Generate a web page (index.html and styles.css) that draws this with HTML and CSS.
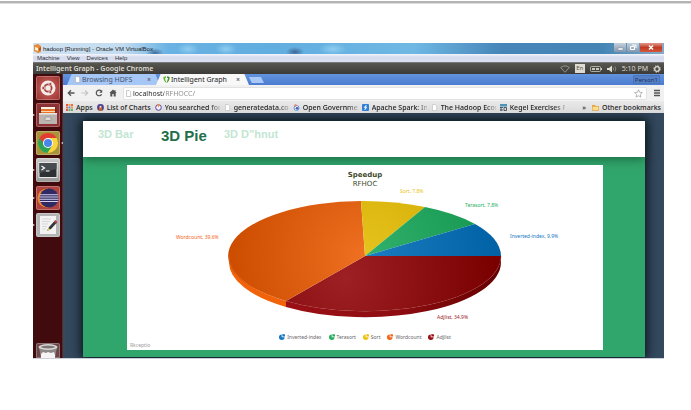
FILE: index.html
```html
<!DOCTYPE html>
<html lang="en">
<head>
<meta charset="utf-8">
<title>Intelligent Graph</title>
<link rel="stylesheet" href="styles.css">
</head>
<body>
<main class="vm">
  <header class="vm-title">
    <svg class="vm-logo" viewBox="0 0 8 9"><path d="M0 1l4-1 3 2v6l-3 1-4-2z" fill="#e88a3a"/><path d="M1 3l3 1v3L1 6z" fill="#fff3d8"/><path d="M5 4l2-1v3L5 7z" fill="#b7561b"/></svg>
    <span class="vm-name">hadoop [Running] - Oracle VM VirtualBox</span>
    <div class="win-buttons">
      <button class="win-btn" aria-label="Minimize"><svg viewBox="0 0 12 9"><rect x="4" y="5" width="5" height="2" fill="#fff" stroke="#67788c" stroke-width=".4"/></svg></button>
      <button class="win-btn" aria-label="Restore"><svg viewBox="0 0 12 9"><path d="M5 2h4v3M3.500 3.500h4v3h-4z" fill="none" stroke="#fff"/></svg></button>
      <button class="win-btn close" aria-label="Close"><svg viewBox="0 0 12 9"><path d="M4 2.500l4 4M8 2.500l-4 4" stroke="#fff" stroke-width="1.500"/></svg></button>
    </div>
  </header>
  <nav class="vm-menu"><a href="#">Machine</a><a href="#">View</a><a href="#">Devices</a><a href="#">Help</a></nav>
  <div class="panel">
    <span class="panel-title">Intelligent Graph - Google Chrome</span>
    <div class="indicators">
      <svg width="10" height="8" viewBox="0 0 10 8"><path d="M.7 2.500Q5-.8 9.300 2.500L5 7.300z" fill="none" stroke="#a5a39a" stroke-width=".8"/></svg>
      <span class="lang">En</span>
      <svg width="12" height="8" viewBox="0 0 12 8"><rect x=".5" y="1.500" width="10" height="5" rx="1" fill="none" stroke="#c9c7be" stroke-width=".8"/><path d="M2 3h3v2H2zM6 3h3v2H6zM11 3h1v2h-1z" fill="#c9c7be"/></svg>
      <svg width="10" height="8" viewBox="0 0 10 8"><path d="M0 3h2l3-2.500v7L2 5H0z" fill="#dfdbd2"/><path d="M6.200 2.500q1 1.500 0 3M8 1.500q1.700 2.500 0 5" fill="none" stroke="#a5a39a" stroke-width=".7"/></svg>
      <time>5:10 PM</time>
      <svg width="8" height="8" viewBox="0 0 8 8"><circle cx="4" cy="4" r="2.300" fill="none" stroke="#dfdbd2" stroke-width="1.300"/><circle cx="4" cy="4" r="3.300" fill="none" stroke="#dfdbd2" stroke-width="1" stroke-dasharray="1.300 1.300"/></svg>
    </div>
  </div>
  <div class="desktop">
    <aside class="launcher">
      <div class="apps">
        <button class="app dash" aria-label="Dash"><svg viewBox="0 0 24 24"><circle cx="12" cy="12" r="7.500" fill="#f4ece9"/><circle cx="12" cy="12" r="3.600" fill="none" stroke="#a8433f" stroke-width="1.800"/><g fill="#a8433f" stroke="#f4ece9" stroke-width=".6"><circle cx="7.300" cy="12" r="1.500"/><circle cx="14.300" cy="8" r="1.500"/><circle cx="14.300" cy="16" r="1.500"/></g></svg></button>
        <button class="app files run" aria-label="Files"><svg viewBox="0 0 24 24"><path d="M4 4h16l1 9H3z" fill="#6b2d22"/><path d="M5 4h14v2H5z" fill="#f6f0e8"/><path d="M5 6h14v4H5z" fill="#e8742c"/><path d="M5 8h14v1H5z" fill="#fbd9b0"/><path d="M3 10h18v11H3z" fill="#b9b4b0"/><path d="M3 10h18v1.500H3z" fill="#e9e6e3"/><rect x="9" y="14" width="6" height="3.500" rx="1" fill="#dedad6" stroke="#8f8a86" stroke-width=".7"/></svg></button>
        <button class="app chrome run focus" aria-label="Google Chrome"><svg viewBox="0 0 24 24"><circle cx="12" cy="12" r="10" fill="#fbd33c"/><path d="M3.300 7A10 10 0 0 0 11.500 22l4.800-7.500-4.300 2.500z" fill="#2da455"/><path d="M3.300 7A10 10 0 0 1 20.700 7H12L7.700 14.500z" fill="#e23d31"/><path d="M3.300 7L7.700 14.500 12 17z" fill="#2da455"/><circle cx="12" cy="12" r="5" fill="#fff"/><circle cx="12" cy="12" r="4" fill="#4a86e8"/></svg></button>
        <button class="app term run" aria-label="Terminal"><svg viewBox="0 0 24 24"><rect x="2.500" y="4" width="19" height="16" rx="1" fill="#e8e8e8"/><rect x="3.500" y="5" width="17" height="14" fill="#2d3133"/><path d="M3.500 5h17v6l-17 4z" fill="#474c4e"/><path d="M5.500 8l3 2-3 2M10 13h3.500" fill="none" stroke="#fff" stroke-width="1.200"/></svg></button>
        <button class="app eclipse run" aria-label="Eclipse"><svg viewBox="0 0 24 24"><circle cx="11" cy="12" r="9.500" fill="#ef8a2b"/><circle cx="13" cy="12" r="9.500" fill="#2f2a63"/><path d="M3.800 8.700h18.400M3.500 11h19M3.500 13.300h19M4 15.500h18" stroke="#d5d2ea" stroke-width="1.100"/></svg></button>
        <button class="app edit run" aria-label="Text Editor"><svg viewBox="0 0 24 24"><path d="M4 3h16v18H4z" fill="#f3f3f3"/><path d="M6 6h9M6 8.500h8M6 11h6M6 13.500h5M6 16h4" stroke="#cfcfcf" stroke-width=".8"/><path d="M11 18l2-4 6-6.500 2 2-6 6.500z" fill="#34383a"/><path d="M18 8.500l1.500-1.500 2 2L20 10.500z" fill="#c0404a"/><path d="M11 18l1.500-3 2 1.500z" fill="#e8cf58"/></svg></button>
      </div>
      <button class="app trash" aria-label="Trash"><svg viewBox="0 0 24 15"><path d="M3 4h18l-2 11H5z" fill="#8d8888"/><ellipse cx="12" cy="4" rx="9.500" ry="3" fill="#d9d6d5"/><ellipse cx="12" cy="4" rx="7" ry="1.500" fill="#7d7979"/><path d="M5 15v-4l2-2 3 1 2-1 3 1 3-1 1 3v3z" fill="#f5f3f3"/></svg></button>
    </aside>
    <section class="browser">
      <div class="tabs">
        <a class="tab" href="#"><svg class="ico" viewBox="0 0 7 7"><path d="M1.500.5h2.700l1.500 1.500v4.500H1.500z" fill="#fff" stroke="#9a9a9a" stroke-width=".5"/></svg><span>Browsing HDFS</span><b>×</b></a>
        <a class="tab active" href="#"><svg class="ico" viewBox="0 0 7 7"><path d="M.3 1L3 .3v1.500L2 2.300l.6 2.300 1 2.400Q.3 5 .3 1z" fill="#6cb52d"/><path d="M6.700 1L4 .3v1.500l1 .5-.6 2.300-.8 2.400Q6.700 5 6.700 1z" fill="#3d9437"/></svg><span>Intelligent Graph</span><b>×</b></a>
        <button class="new-tab" aria-label="New tab"></button>
        <span class="person">Person1</span>
      </div>
      <div class="toolbar">
        <button aria-label="Back"><svg viewBox="0 0 8 8"><path d="M7.500 4H1.500M4 1.300L1.300 4 4 6.700" fill="none" stroke="#555" stroke-width="1.300"/></svg></button>
        <button aria-label="Forward"><svg viewBox="0 0 8 8"><path d="M.5 4h6M4 1.300L6.700 4 4 6.700" fill="none" stroke="#c4c4c4" stroke-width="1.200"/></svg></button>
        <button aria-label="Reload"><svg viewBox="0 0 8 8"><path d="M6.300 2.200A2.800 2.800 0 1 0 6.600 5.200" fill="none" stroke="#555" stroke-width="1.200"/><path d="M7.200.7v3H4.200z" fill="#555"/></svg></button>
        <button aria-label="Home"><svg viewBox="0 0 8 8"><path d="M4 .5L.3 4h1v3.500h2V5h1.400v2.500h2V4h1L6.500 2.800V1h-1v.9z" fill="#555"/></svg></button>
        <div class="omnibox">
          <svg class="ico" viewBox="0 0 7 7"><path d="M1.500.5h2.700l1.500 1.500v4.500H1.500z" fill="#fff" stroke="#9a9a9a" stroke-width=".5"/></svg>
          <input type="text" aria-label="Address" value="localhost/RFHOCC/">
          <svg class="star" viewBox="0 0 9 9"><path d="M4.500.7l1.100 2.600 2.800.2-2.100 1.900.6 2.800-2.400-1.500-2.400 1.500.6-2.800L.6 3.500l2.800-.2z" fill="#fff" stroke="#999" stroke-width=".7"/></svg>
        </div>
        <button aria-label="Menu"><svg viewBox="0 0 8 8"><path d="M1 1.500h6M1 4h6M1 6.500h6" stroke="#555" stroke-width="1.400"/></svg></button>
      </div>
      <nav class="bookmarks">
        <a href="#"><svg class="ico" viewBox="0 0 7 7"><path d="M0 0h2v2H0zM0 5h2v2H0z" fill="#e2574c"/><path d="M2.500 0h2v2h-2zM5 2.500h2v2H5z" fill="#ef9a3a"/><path d="M5 0h2v2H5zM0 2.500h2v2H0z" fill="#e9694f"/><path d="M2.500 2.500h2v2h-2z" fill="#4f8fe0"/><path d="M2.500 5h2v2h-2zM5 5h2v2H5z" fill="#6db36b"/></svg><span>Apps</span></a>
        <a href="#"><svg class="ico" viewBox="0 0 7 7"><circle cx="3.500" cy="3.500" r="3.400" fill="#4c3f94"/><path d="M2 7V4q0-2 1.500-2T5 4v3z" fill="#c7662b"/><circle cx="3.500" cy="2.800" r="1" fill="#e9d9cf"/></svg><span>List of Charts</span></a>
        <a class="long" href="#"><svg class="ico" viewBox="0 0 7 7"><circle cx="3.500" cy="3.500" r="2.800" fill="#f4efff" stroke="#5a3fa0"/><path d="M2 .3h3L3.500 3.500z" fill="#f0953a"/></svg><span>You searched for</span></a>
        <a class="long" href="#"><svg class="ico" viewBox="0 0 7 7"><path d="M1.500.5h2.700l1.500 1.500v4.500H1.500z" fill="#fff" stroke="#b0b0b0" stroke-width=".5"/></svg><span>generatedata.co</span></a>
        <a class="long" href="#"><svg class="ico" viewBox="0 0 7 7"><circle cx="3.500" cy="4" r="2.500" fill="#fff" stroke="#4b9ddd"/><circle cx="2.500" cy="1.500" r="1.300" fill="#e88074"/><circle cx="4" cy="4.300" r="1.400" fill="#5b55b5"/></svg><span>Open Governme</span></a>
        <a class="long" href="#"><svg class="ico" viewBox="0 0 7 7"><rect width="7" height="7" rx="1" fill="#2f7fd6"/><path d="M4.300 1L2 3.500h1.500L2.700 6 5 3.200H3.700z" fill="#fff" stroke="#fff" stroke-width=".4"/></svg><span>Apache Spark: In</span></a>
        <a class="long" href="#"><svg class="ico" viewBox="0 0 7 7"><path d="M1.500.5h2.700l1.500 1.500v4.500H1.500z" fill="#fff" stroke="#b0b0b0" stroke-width=".5"/></svg><span>The Hadoop Ecos</span></a>
        <a class="long" href="#"><svg class="ico" viewBox="0 0 7 7"><path d="M0 0h7v2.500H0z" fill="#4f93b8"/><path d="M0 3.500h3M4 3.500v3h2.500v-3zM1 3.500v3.500M0 6h3" fill="none" stroke="#3c4b55" stroke-width=".9"/></svg><span>Kegel Exercises F</span></a>
        <span class="more">»</span>
        <a href="#"><svg class="ico" viewBox="0 0 7 7"><path d="M0 1h3l.7 1H7v4.700H0z" fill="#e3a23c"/><path d="M.6 2.700h5.800v3.400H.6z" fill="#fbdc91"/></svg><span>Other bookmarks</span></a>
      </nav>
      <div class="page">
        <div class="site">
          <nav class="site-nav"><a href="#">3D Bar</a><a class="on" href="#">3D Pie</a><a href="#">3D D"hnut</a></nav>
          <div class="stage">
            <figure class="chart">
              <figcaption><strong>Speedup</strong><span>RFHOC</span></figcaption>
              <svg class="pie" viewBox="0 0 476 143">
                <defs>
                  <radialGradient id="blue" gradientUnits="userSpaceOnUse" cx="238" cy="68" r="136"><stop offset="0" stop-color="#1c7cc0"/><stop offset="1" stop-color="#0061a5"/></radialGradient>
                  <radialGradient id="green" gradientUnits="userSpaceOnUse" cx="238" cy="68" r="136"><stop offset="0" stop-color="#31b16b"/><stop offset="1" stop-color="#159650"/></radialGradient>
                  <radialGradient id="gold" gradientUnits="userSpaceOnUse" cx="238" cy="68" r="136"><stop offset="0" stop-color="#e6c31d"/><stop offset="1" stop-color="#d0a800"/></radialGradient>
                  <radialGradient id="orange" gradientUnits="userSpaceOnUse" cx="238" cy="68" r="136"><stop offset="0" stop-color="#f07022"/><stop offset="1" stop-color="#cc4c00"/></radialGradient>
                  <radialGradient id="red" gradientUnits="userSpaceOnUse" cx="218" cy="90" r="150"><stop offset="0" stop-color="#9d2024"/><stop offset="1" stop-color="#7a0000"/></radialGradient>
                  <linearGradient id="rim"><stop offset="0" stop-color="#9a1016"/><stop offset=".5" stop-color="#8f0d12"/><stop offset="1" stop-color="#650000"/></linearGradient>
                </defs>
                <path d="M102 68A136 55 0 0 0 159 113v6A136 55 0 0 1 102 74z" fill="#f26208"/>
                <path d="M374 68A136 55 0 0 1 159 113v6A136 55 0 0 0 374 74z" fill="url(#rim)"/>
                <path d="M238 68H374A136 55 0 0 1 159 113z" fill="url(#red)"/>
                <path d="M238 68L159 113A136 55 0 0 1 234 13z" fill="url(#orange)"/>
                <path d="M238 68L234 13A136 55 0 0 1 298 19z" fill="url(#gold)"/>
                <path d="M238 68L298 19A136 55 0 0 1 348 36z" fill="url(#green)"/>
                <path d="M238 68L348 36A136 55 0 0 1 374 68z" fill="url(#blue)"/>
                <path d="M102 68A136 55 0 0 0 159 113" fill="none" stroke="#f07a2c" stroke-width=".3"/>
                <path d="M159 113A136 55 0 0 0 374 68" fill="none" stroke="#a02c2e" stroke-width=".3"/>
                <g class="labels">
                  <text x="273" y="5" fill="#edc211">Sort, 7.8%</text>
                  <text x="338" y="19" fill="#27ae60">Terasort, 7.8%</text>
                  <text x="383" y="50" fill="#1478c2">Inverted-index, 9.9%</text>
                  <text x="49" y="51" fill="#f2641a">Wordcount, 39.6%</text>
                  <text x="310" y="131" fill="#9a1a1e">Adjlist, 34.9%</text>
                </g>
              </svg>
              <ul class="legend">
                <li><svg class="c1" viewBox="0 0 6 6"><path d="M2.700 3.300V.4A2.800 2.800 0 1 0 5.600 3.300z"/><path d="M3.400 2.600V0L6 .5v2.100z"/></svg>Inverted-index</li>
                <li><svg class="c2" viewBox="0 0 6 6"><path d="M2.700 3.300V.4A2.800 2.800 0 1 0 5.600 3.300z"/><path d="M3.400 2.600V0L6 .5v2.100z"/></svg>Terasort</li>
                <li><svg class="c3" viewBox="0 0 6 6"><path d="M2.700 3.300V.4A2.800 2.800 0 1 0 5.600 3.300z"/><path d="M3.400 2.600V0L6 .5v2.100z"/></svg>Sort</li>
                <li><svg class="c4" viewBox="0 0 6 6"><path d="M2.700 3.300V.4A2.800 2.800 0 1 0 5.600 3.300z"/><path d="M3.400 2.600V0L6 .5v2.100z"/></svg>Wordcount</li>
                <li><svg class="c5" viewBox="0 0 6 6"><path d="M2.700 3.300V.4A2.800 2.800 0 1 0 5.600 3.300z"/><path d="M3.400 2.600V0L6 .5v2.100z"/></svg>Adjlist</li>
              </ul>
              <small>Rkceptio</small>
            </figure>
          </div>
        </div>
      </div>
    </section>
  </div>
</main>
</body>
</html>
```
FILE: styles.css
```css
* { box-sizing: border-box; }
body { margin: 0; border-top: 1px solid #fff; background: #fff; font-family: "Noto Sans", "Open Sans", sans-serif; font-size: 7px; color: #333; }
body::before { content: ""; display: block; height: 2px; background: #b4b4b4; border-bottom: 1px solid #dcdcdc; }
a { color: inherit; text-decoration: none; }
button { border: 0; padding: 0; margin: 0; background: none; display: block; }
svg { display: block; flex: none; }
.ico { width: 7px; height: 7px; }

.vm { margin: 39px 27px 52px 33px; border-bottom: 1px solid #ccd0d8; }
.vm-title { display: flex; align-items: center; height: 11px; padding: 0 2px 0 1px; font: 6px "Liberation Sans", sans-serif; color: #222;
  background:
    radial-gradient(ellipse 9px 5px at 122px 10px, #3f6d9c, transparent),
    radial-gradient(ellipse 11px 6px at 155px 6px, #8fcdf0, transparent),
    radial-gradient(ellipse 11px 6px at 193px 6px, #8fcdf0, transparent),
    radial-gradient(ellipse 9px 5px at 262px 9px, #3f6797, transparent),
    radial-gradient(ellipse 14px 6px at 300px 6px, #8fcdf0, transparent),
    linear-gradient(90deg, #cfe2f2, #c3dcf0 90px, #69b2e3 135px, #60addf 240px, #6fb8e4 380px, #4585b8 470px, #4585b5 570px, #86a9c6); }
.vm-logo { width: 8px; height: 9px; }
.vm-name { margin-left: 1px; white-space: nowrap; }
.win-buttons { display: flex; margin-left: auto; align-self: flex-start; gap: 1px; }
.win-btn { width: 12px; height: 9px; background: linear-gradient(#c4d0dc, #8298ae); border-radius: 0 0 1px 1px; }
.win-btn svg { height: 9px; margin: auto; }
.win-btn.close { width: 22px; background: linear-gradient(#e29a8c, #c03a25 50%, #d5573a); }
.vm-menu { display: flex; gap: 7px; height: 8px; padding-left: 4px; font: 6px/8px "Liberation Sans", sans-serif; background: linear-gradient(#f4f6fb, #d5dbee 40%, #dde2f2); }

.panel { display: flex; align-items: center; justify-content: space-between; height: 12px; padding: 0 3px; background: linear-gradient(#57564f, #3c3b37); color: #dfdbd2; border-top: 1px solid #777; }
.panel-title { font-weight: 600; font-size: 7px; }
.indicators { display: flex; align-items: center; gap: 5px; font-size: 7px; }
.lang { width: 10px; height: 9px; line-height: 9px; text-align: center; background: #dfdbd2; color: #55544d; font-size: 6px; }

.desktop { display: flex; height: 284px; }
.launcher { width: 30px; flex: none; display: flex; flex-direction: column; justify-content: space-between; padding: 2px 3px 0; background: #410a0d; border-right: 1px solid #5c2a2e; }
.apps { display: flex; flex-direction: column; justify-content: space-between; height: 161px; }
.app { position: relative; width: 24px; height: 24px; border-radius: 2px; box-shadow: inset 0 0 0 1px rgba(255,255,255,.25); }
.app svg { width: 24px; height: 24px; }
.dash { background: radial-gradient(#d06a62, #98302f); }
.files { background: #8f3034; }
.chrome { background: #a8923a; }
.term { background: linear-gradient(#c9c9c9, #989898); }
.eclipse { background: #b04440; }
.edit { background: #b5b5b5; }
.app.trash { height: 15px; background: #6b4547; border-radius: 2px 2px 0 0; }
.app.trash svg { height: 15px; }
.run::before { content: ""; position: absolute; left: -3px; top: 11px; border: 1px solid transparent; border-left: 2px solid #e8dede; border-right: 0; }
.focus::after { content: ""; position: absolute; right: -3px; top: 11px; border: 1px solid transparent; border-right: 2px solid #e8dede; border-left: 0; }

.browser { flex: 1; min-width: 0; display: flex; flex-direction: column; }
.tabs { display: flex; height: 11px; padding: 0 4px; background: linear-gradient(#6294de, #4c7bd0); }
.tab { display: flex; align-items: center; gap: 1px; width: 93px; height: 11px; padding: 0 9px 0 7px; background: #a6c6f6; color: #44546a; white-space: nowrap; clip-path: polygon(5% 0, 95% 0, 100% 100%, 0 100%); }
.tab b { margin-left: auto; font-size: 7px; color: #667; }
.tab.active { background: #f8f8f8; color: #222; margin-left: -4px; }
.new-tab { width: 15px; height: 6px; margin-top: 3px; background: #a8c8f8; clip-path: polygon(0 0, 80% 0, 100% 100%, 18% 100%); }
.person { margin-left: auto; align-self: center; height: 9px; line-height: 8px; padding: 0 1px; font-size: 6px; color: #1f3561; background: #5580c6; border: 1px solid #4a74b8; border-radius: 1px; }
.toolbar { display: flex; align-items: center; gap: 6px; height: 16px; padding: 0 3px 0 4px; background: #f1f1f1; }
.toolbar button svg { width: 8px; height: 8px; }
.omnibox { flex: 1; display: flex; align-items: center; gap: 1px; height: 13px; padding: 0 3px 0 1px; background: #fff; border: 1px solid #e2e2e2; border-radius: 1px; }
.omnibox input { flex: 1; min-width: 0; height: 11px; padding: 0; border: 0; outline: 0; font: 7px "Noto Sans", sans-serif; color: transparent; background: linear-gradient(90deg, #222 31px, #8a8a8a 31px); -webkit-background-clip: text; background-clip: text; }
.star { width: 9px; height: 9px; }
.bookmarks { display: flex; align-items: center; gap: 4px; height: 12px; padding: 0 3px 0 3px; background: linear-gradient(#e9e9e9, #dadada); font-weight: 500; color: #222; white-space: nowrap; }
.bookmarks a { display: flex; align-items: center; gap: 3px; }
.bookmarks .long span { width: 55px; -webkit-mask-image: linear-gradient(90deg, #000 80%, transparent 105%); mask-image: linear-gradient(90deg, #000 80%, transparent 105%); }
.more { margin-left: auto; margin-right: 2px; }

.page { flex: 1; padding: 8px 19px 1px 20px; background: #34495e; overflow: hidden; }
.site { display: flex; flex-direction: column; height: 100%; background: #31a66c; box-shadow: 0 0 10px 2px #0b131c; }
.site-nav { display: flex; height: 36px; padding: 0 15px; background: #fff; box-shadow: 0 2px 10px rgba(0,40,20,.5); font: 700 11px "Liberation Sans", sans-serif; color: #c3e6d3; }
.site-nav a { min-width: 63px; line-height: 26px; white-space: nowrap; }
.site-nav .on { font-size: 15px; line-height: 30px; color: #1f7049; }
.stage { flex: 1; padding: 8px 42px 7px 44px; }
.chart { margin: 0; height: 100%; padding-top: 6px; background: #fff; }
.chart figcaption { display: flex; flex-direction: column; height: 17px; align-items: center; font: 7px/9px "DejaVu Sans", sans-serif; color: #3e4a2c; }
.pie { width: 100%; }
.labels { font-size: 5px; }
.legend { display: flex; justify-content: center; gap: 7px; margin: 0; padding: 1px 0 0; list-style: none; font-size: 5px; line-height: 10px; color: #666; }
.legend li { display: flex; align-items: center; gap: 2px; }
.legend svg { width: 6px; height: 6px; fill: currentColor; }
.c1 { color: #1478c2; }
.c2 { color: #27ae60; }
.c3 { color: #edc211; }
.c4 { color: #f2641a; }
.c5 { color: #9a1016; }
.chart small { display: block; padding-left: 3px; font-size: 5px; line-height: 6px; color: #999; }
```
